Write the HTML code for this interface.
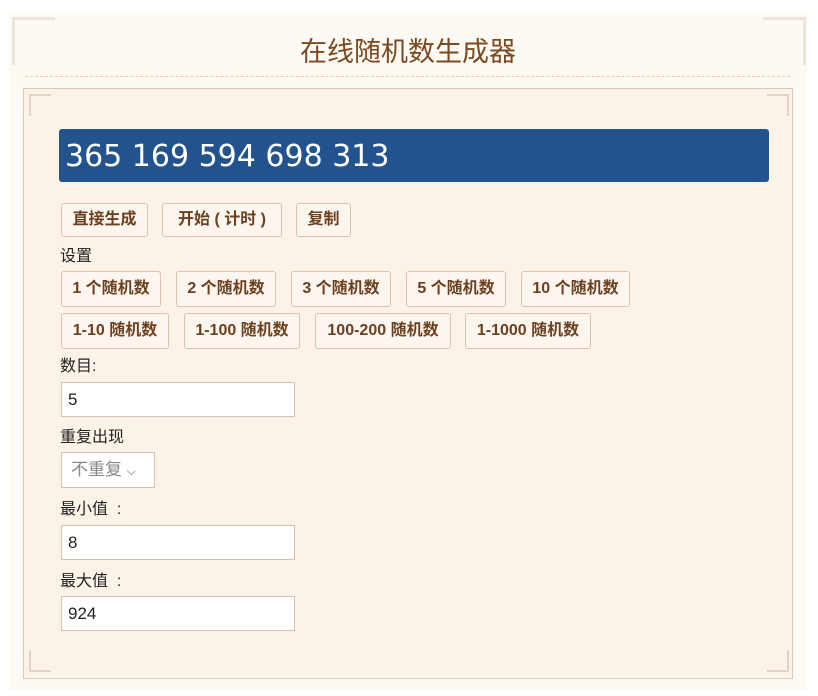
<!DOCTYPE html>
<html><head><meta charset="utf-8"><style>
body{margin:0;width:818px;height:696px;background:#fff;position:relative;font-family:"Liberation Sans","Noto Sans CJK SC",sans-serif;overflow:hidden}
.a{position:absolute}
.outer{left:9px;top:13px;width:798px;height:677px;background:#fdf9f3}
.title{left:0;width:816px;top:30px;text-align:center;font-size:27px;color:#7a4a22}
.dash{left:25px;top:76px;width:765px;border-top:1px dashed #f0c9a0}
.inner{left:23px;top:88px;width:768px;height:589px;background:#fbf3e7;border:1px solid #dcc6b4}
.bar{left:59px;top:129px;width:710px;height:53px;background:#22538f;border-radius:3px;color:#fff;font-family:"DejaVu Sans",sans-serif;font-size:30px;line-height:55px;padding-left:6px;box-sizing:border-box}
.b{position:absolute;height:34px;box-sizing:border-box;border:1px solid #dcc3b0;border-radius:3px;background:#fcf6ee;color:#6b4020;font-weight:bold;font-size:16px;line-height:32px;text-align:center;white-space:nowrap}
.l{position:absolute;left:60px;font-size:16px;color:#222}
.in{position:absolute;left:61px;width:234px;height:35px;box-sizing:border-box;border:1px solid #d8bfae;background:#fff;font-size:17px;line-height:33px;padding-left:6px;color:#222}
.c{position:absolute;width:20px;height:20px;border-color:#e2d4c6;border-style:solid}
</style></head><body>
<div class="a outer"></div>
<div class="a title">在线随机数生成器</div>
<div class="a dash"></div>
<div class="a inner"></div>
<div class="c" style="left:12px;top:17px;width:40px;height:45px;border-width:3px 0 0 3px;border-color:#eee4da"></div>
<div class="c" style="left:763px;top:17px;width:40px;height:45px;border-width:3px 3px 0 0;border-color:#eee4da"></div>
<div class="c" style="left:29px;top:94px;border-width:2px 0 0 2px"></div>
<div class="c" style="left:767px;top:94px;border-width:2px 2px 0 0"></div>
<div class="c" style="left:29px;top:650px;border-width:0 0 2px 2px"></div>
<div class="c" style="left:767px;top:650px;border-width:0 2px 2px 0"></div>
<div class="a bar">365 169 594 698 313</div>
<div class="b" style="left:61px;top:203px;width:87px">直接生成</div>
<div class="b" style="left:162px;top:203px;width:120px">开始 ( 计时 )</div>
<div class="b" style="left:296px;top:203px;width:55px">复制</div>
<div class="l" style="top:242px">设置</div>
<div class="b" style="left:61px;top:271px;width:100px;height:36px;line-height:34px">1 个随机数</div>
<div class="b" style="left:176px;top:271px;width:100px;height:36px;line-height:34px">2 个随机数</div>
<div class="b" style="left:291px;top:271px;width:100px;height:36px;line-height:34px">3 个随机数</div>
<div class="b" style="left:406px;top:271px;width:100px;height:36px;line-height:34px">5 个随机数</div>
<div class="b" style="left:521px;top:271px;width:109px;height:36px;line-height:34px">10 个随机数</div>
<div class="b" style="left:61px;top:313px;width:108px;height:36px;line-height:34px">1-10 随机数</div>
<div class="b" style="left:184px;top:313px;width:116px;height:36px;line-height:34px">1-100 随机数</div>
<div class="b" style="left:315px;top:313px;width:136px;height:36px;line-height:34px">100-200 随机数</div>
<div class="b" style="left:465px;top:313px;width:126px;height:36px;line-height:34px">1-1000 随机数</div>
<div class="l" style="top:352px">数目:</div>
<div class="in" style="top:382px">5</div>
<div class="l" style="top:423px">重复出现</div>
<div class="in" style="top:452px;width:94px;height:36px;color:#888;font-size:17px;padding-left:9px">不重复 <span style="font-size:12px;color:#666">⌵</span></div>
<div class="l" style="top:495px">最小值 &nbsp;:</div>
<div class="in" style="top:525px">8</div>
<div class="l" style="top:567px">最大值 &nbsp;:</div>
<div class="in" style="top:596px">924</div>
</body></html>
